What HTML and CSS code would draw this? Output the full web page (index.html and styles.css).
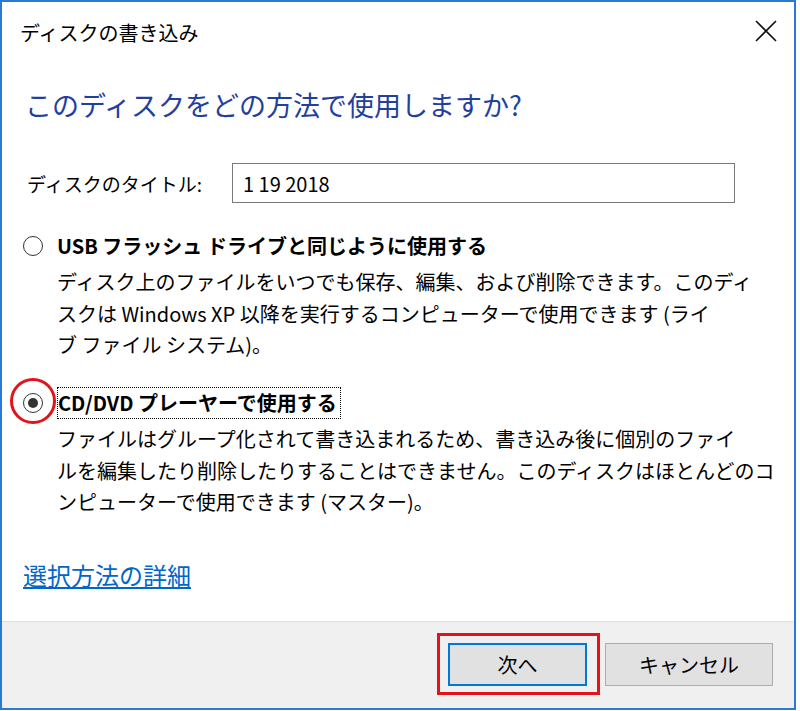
FILE: index.html
```html
<!DOCTYPE html>
<html lang="ja">
<head>
    <meta charset="UTF-8">
    <meta name="viewport" content="width=device-width, initial-scale=1.0">
    <title>ディスクの書き込み</title>
    <link rel="stylesheet" href="styles.css">
</head>
<body>
    <div class="window">
        <div class="titlebar">
            <span class="title">ディスクの書き込み</span>
            <svg class="close" width="22" height="22" viewBox="0 0 22 22">
                <path d="M1 1 L21 21 M21 1 L1 21" stroke="#111" stroke-width="1.6" fill="none"/>
            </svg>
        </div>

        <div class="content">
            <h1 class="heading">このディスクをどの方法で使用しますか?</h1>

            <div class="title-row">
                <span class="title-label">ディスクのタイトル:</span>
                <input class="title-input" type="text" value="1 19 2018">
            </div>

            <div class="option first">
                <span class="radio"></span>
                <span class="option-text">USB フラッシュ ドライブと同じように使用する</span>
            </div>
            <div class="desc">
                ディスク上のファイルをいつでも保存、編集、および削除できます。このディ<br>
                スクは Windows XP 以降を実行するコンピューターで使用できます (ライ<br>
                ブ ファイル システム)。
            </div>

            <div class="option second">
                <span class="radio checked"><span class="annot-circle"></span></span>
                <span class="option-text focus">CD/DVD プレーヤーで使用する</span>
            </div>
            <div class="desc">
                ファイルはグループ化されて書き込まれるため、書き込み後に個別のファイ<br>
                ルを編集したり削除したりすることはできません。このディスクはほとんどのコ<br>
                ンピューターで使用できます (マスター)。
            </div>

            <a class="more" href="#">選択方法の詳細</a>
        </div>

        <div class="footer">
            <button class="btn btn-next">次へ<span class="annot-box"></span></button>
            <button class="btn btn-cancel">キャンセル</button>
        </div>
    </div>
</body>
</html>
```

FILE: styles.css
```css
body {
    margin: 0;
    background-color: #fff;
    font-family: "Noto Sans CJK JP", "Noto Sans", sans-serif;
    color: #000;
}
.window {
    box-sizing: border-box;
    width: 796px;
    height: 710px;
    border: 2px solid #2a7ad5;
    display: flex;
    flex-direction: column;
    background-color: #fff;
}
.titlebar {
    height: 60px;
    flex: none;
    display: flex;
    align-items: center;
    justify-content: space-between;
    padding: 0 17px 0 18px;
}
.title {
    font-size: 20px;
}
.close {
    margin-top: -2px;
}
.content {
    flex: 1;
    padding: 0 21px;
}
.heading {
    margin: 23px 0 0 2px;
    font-size: 27px;
    line-height: 40px;
    font-weight: normal;
    color: #1f409f;
}
.title-row {
    margin-top: 38px;
    height: 40px;
    display: flex;
    align-items: center;
}
.title-label {
    margin-left: 4px;
    width: 205px;
    font-size: 19px;
}
.title-input {
    box-sizing: border-box;
    width: 503px;
    height: 40px;
    margin: 0;
    border: 1px solid #7a7a7a;
    padding: 0 0 0 10px;
    font-family: inherit;
    font-size: 20px;
    color: #000;
    outline: none;
}
.option {
    height: 32px;
    display: flex;
    align-items: center;
    font-size: 20px;
    font-weight: bold;
}
.option.first {
    margin-top: 27px;
}
.option.second {
    margin-top: 26.5px;
}
.radio {
    position: relative;
    box-sizing: border-box;
    width: 20px;
    height: 20px;
    margin-right: 14px;
    border: 1.5px solid #333;
    border-radius: 50%;
    flex: none;
}
.radio.checked::after {
    content: "";
    position: absolute;
    left: 3.5px;
    top: 3.5px;
    width: 10px;
    height: 10px;
    border-radius: 50%;
    background-color: #333;
}
.option-text {
    line-height: 30px;
    white-space: nowrap;
}
.focus {
    border: 1px dotted #000;
    padding-right: 3px;
}
.annot-circle {
    position: absolute;
    left: -14px;
    top: -16px;
    width: 46px;
    height: 46px;
    box-sizing: border-box;
    border: 3px solid #e3131b;
    border-radius: 50%;
}
.desc {
    margin: 4px 0 0 34px;
    font-size: 20px;
    line-height: 31.5px;
    white-space: nowrap;
}
.more {
    display: inline-block;
    margin-top: 41.5px;
    font-size: 24px;
    line-height: 32px;
    color: #0066cc;
    text-decoration: underline;
}
.footer {
    box-sizing: border-box;
    height: 87px;
    flex: none;
    border-top: 1px solid #dfdfdf;
    background-color: #f0f0f0;
    display: flex;
    justify-content: flex-end;
    align-items: flex-start;
    gap: 18px;
    padding: 21px 21px 0 0;
}
.btn {
    box-sizing: border-box;
    height: 43px;
    margin: 0;
    padding: 0;
    background-color: #e1e1e1;
    border: 1px solid #adadad;
    font-family: inherit;
    font-size: 20px;
    color: #000;
}
.btn-next {
    position: relative;
    width: 139px;
    border: 2px solid #0078d7;
}
.btn-cancel {
    width: 168px;
}
.annot-box {
    position: absolute;
    left: -13px;
    top: -12px;
    right: -15px;
    bottom: -11px;
    border: 3px solid #e3131b;
}
```
